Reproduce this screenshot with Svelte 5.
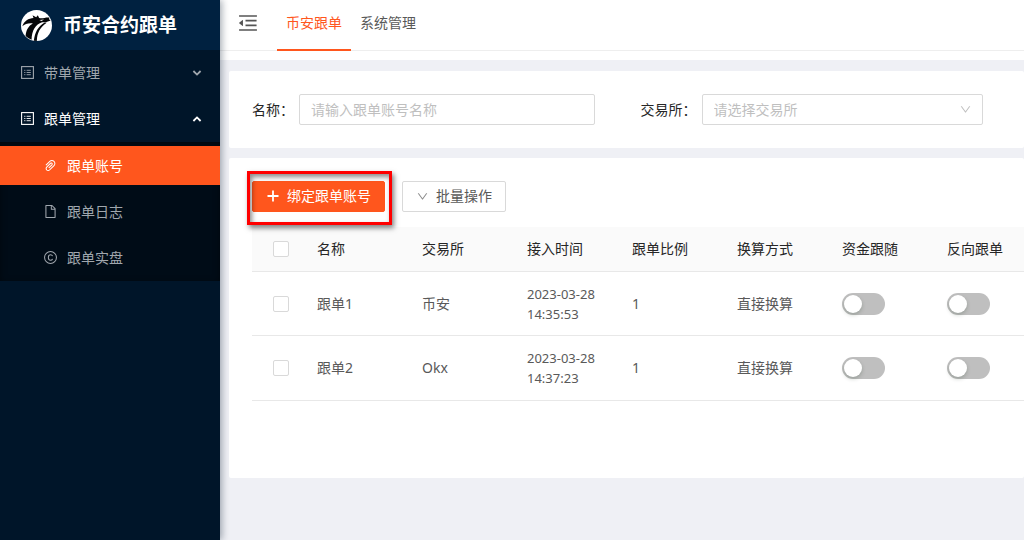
<script>
  const tabs = ['币安跟单', '系统管理'];
  let activeTab = $state('币安跟单');
  let copyOpen = $state(true);
  let leadOpen = $state(false);

  const subItems = [
    { label: '跟单账号', icon: 'clip' },
    { label: '跟单日志', icon: 'file' },
    { label: '跟单实盘', icon: 'copyright' }
  ];
  let activeItem = $state('跟单账号');

  const columns = ['名称', '交易所', '接入时间', '跟单比例', '换算方式', '资金跟随', '反向跟单'];
  let rows = $state([
    { name: '跟单1', exchange: '币安', date: '2023-03-28', time: '14:35:53', ratio: '1', mode: '直接换算', checked: false, follow: false, reverse: false },
    { name: '跟单2', exchange: 'Okx', date: '2023-03-28', time: '14:37:23', ratio: '1', mode: '直接换算', checked: false, follow: false, reverse: false }
  ]);
  let allChecked = $derived(rows.every((r) => r.checked));

  function toggleAll(event) {
    for (const row of rows) row.checked = event.currentTarget.checked;
  }
</script>

{#snippet profileIcon()}
  <svg class="icon" viewBox="0 0 13 13" aria-hidden="true">
    <rect x="0.6" y="0.6" width="11.8" height="11.8" fill="none" stroke="currentColor" stroke-width="1.1" />
    <path d="M3.2 4.3h1.2M3.2 6.5h1.2M3.2 8.7h1.2M5.6 4.3h4.2M5.6 6.5h4.2M5.6 8.7h4.2" fill="none" stroke="currentColor" stroke-width="0.9" />
  </svg>
{/snippet}

{#snippet downIcon()}
  <svg class="down" viewBox="64 64 896 896" fill="currentColor" aria-hidden="true">
    <path d="M884 256h-75c-5.1 0-9.9 2.5-12.9 6.6L512 654.2 227.9 262.6c-3-4.1-7.8-6.6-12.9-6.6h-75c-6.5 0-10.3 7.4-6.5 12.7l352.6 486.1c12.8 17.6 39 17.6 51.7 0l352.6-486.1c3.9-5.3.1-12.7-6.4-12.7z" />
  </svg>
{/snippet}

{#snippet caret(open)}
  <svg class="caret" class:open viewBox="0 0 10 8" aria-hidden="true">
    <path d="M1.4 2l3.6 3.6L8.6 2" fill="none" stroke="currentColor" stroke-width="1.8" />
  </svg>
{/snippet}

<div class="app">
  <aside>
    <div class="brand">
      <svg class="logo" viewBox="8 6 94 94" aria-hidden="true">
        <circle cx="55" cy="53" r="47" fill="#fff" />
        <path d="M12 55C17 39 31 31 46 30L43 22L54 28L59 22L63 30C73 33 84 27 94 29L93 34L98 38L83 43L72 43C52 50 41 66 40 96C34 94 28 90 22 85C23 67 31 54 44 47C31 45 20 49 12 55Z" fill="#050608" />
        <path d="M80 44C60 55 50 74 47 99L56 100C57 76 65 59 86 45Z" fill="#050608" />
        <path d="M64 36L78 35L70 39Z" fill="#fff" />
      </svg>
      <h1>币安合约跟单</h1>
    </div>
    <nav aria-label="主菜单">
      <button class="item" aria-expanded={leadOpen} onclick={() => (leadOpen = !leadOpen)}>
        {@render profileIcon()}<span>带单管理</span>{@render caret(leadOpen)}
      </button>
      <button class="item" class:expanded={copyOpen} aria-expanded={copyOpen} onclick={() => (copyOpen = !copyOpen)}>
        {@render profileIcon()}<span>跟单管理</span>{@render caret(copyOpen)}
      </button>
    </nav>
    {#if copyOpen}
      <ul class="submenu">
        {#each subItems as item}
          <li>
            <button class="item sub" class:active={activeItem === item.label} onclick={() => (activeItem = item.label)}>
              {#if item.icon === 'clip'}
                <svg class="icon" viewBox="64 64 896 896" fill="currentColor" aria-hidden="true">
                  <path d="M779.3 196.6c-94.2-94.2-247.6-94.2-341.7 0l-261 260.8c-1.7 1.7-2.6 4-2.6 6.4s.9 4.7 2.6 6.4l36.9 36.9a9 9 0 0 0 12.7 0l261-260.8c32.4-32.4 75.5-50.2 121.3-50.2s88.9 17.8 121.2 50.2c32.4 32.4 50.2 75.5 50.2 121.2 0 45.8-17.8 88.8-50.2 121.2l-266 265.9-43.1 43.1c-40.3 40.3-105.8 40.3-146.1 0-19.5-19.5-30.2-45.4-30.2-73s10.7-53.5 30.2-73l263.9-263.8c6.7-6.6 15.5-10.3 24.9-10.3h.1c9.4 0 18.1 3.7 24.7 10.3 6.7 6.7 10.3 15.5 10.3 24.9 0 9.3-3.7 18.1-10.3 24.7L372.4 653c-1.7 1.7-2.6 4-2.6 6.4s.9 4.7 2.6 6.4l36.9 36.9a9 9 0 0 0 12.7 0l215.6-215.6c19.9-19.9 30.8-46.3 30.8-74.4s-11-54.6-30.8-74.4c-41.1-41.1-107.9-41-149 0L463 364 224.8 602.1A172.22 172.22 0 0 0 174 724.8c0 46.3 18.1 89.8 50.8 122.5 33.9 33.8 78.3 50.7 122.7 50.7 44.4 0 88.8-16.9 122.6-50.7l309.2-309C824.8 492.7 850 432 850 367.5c.1-64.6-25.1-125.3-70.7-170.9z" />
                </svg>
              {:else if item.icon === 'file'}
                <svg class="icon" viewBox="64 64 896 896" fill="currentColor" aria-hidden="true">
                  <path d="M854.6 288.6L639.4 73.4c-6-6-14.1-9.4-22.6-9.4H192c-17.7 0-32 14.3-32 32v832c0 17.7 14.3 32 32 32h640c17.7 0 32-14.3 32-32V311.3c0-8.5-3.4-16.7-9.4-22.7zM790.2 326H602V137.8L790.2 326zm1.8 562H232V136h302v216a42 42 0 0 0 42 42h216v494z" />
                </svg>
              {:else}
                <svg class="icon" viewBox="0 0 14 14" fill="none" stroke="currentColor" aria-hidden="true">
                  <circle cx="7" cy="7" r="6.4" stroke-width="1.1" />
                  <path d="M9.2 5.6C8.9 4.5 8.1 4 7 4C5.5 4 4.7 5.1 4.7 7S5.5 10 7 10C8.1 10 8.9 9.5 9.2 8.4" stroke-width="1.1" />
                </svg>
              {/if}
              <span>{item.label}</span>
            </button>
          </li>
        {/each}
      </ul>
    {/if}
  </aside>

  <div class="page">
    <header>
      <div class="topbar">
        <button class="fold" aria-label="收起菜单">
          <svg viewBox="64 64 896 896" fill="currentColor" aria-hidden="true">
            <path d="M408 442h480c4.4 0 8-3.6 8-8v-56c0-4.4-3.6-8-8-8H408c-4.4 0-8 3.6-8 8v56c0 4.4 3.6 8 8 8zm-8 204c0 4.4 3.6 8 8 8h480c4.4 0 8-3.6 8-8v-56c0-4.4-3.6-8-8-8H408c-4.4 0-8 3.6-8 8v56zm504-486H120c-4.4 0-8 3.6-8 8v56c0 4.4 3.6 8 8 8h784c4.4 0 8-3.6 8-8v-56c0-4.4-3.6-8-8-8zm0 632H120c-4.4 0-8 3.6-8 8v56c0 4.4 3.6 8 8 8h784c4.4 0 8-3.6 8-8v-56c0-4.4-3.6-8-8-8zM115.4 518.9L271.7 642c5.8 4.6 14.4.5 14.4-6.9V388.9c0-7.4-8.5-11.5-14.4-6.9L115.4 505.1a8.74 8.74 0 0 0 0 13.8z" />
          </svg>
        </button>
        {#each tabs as tab}
          <button class="tab" class:current={activeTab === tab} onclick={() => (activeTab = tab)}>{tab}</button>
        {/each}
      </div>
    </header>

    <main>
      <form class="card filters">
        <div class="field">
          <label for="account-name">名称：</label>
          <input id="account-name" type="text" placeholder="请输入跟单账号名称" />
        </div>
        <div class="field">
          <label for="exchange">交易所：</label>
          <div class="select">
            <select id="exchange">
              <option value="">请选择交易所</option>
              <option>币安</option>
              <option>Okx</option>
            </select>
            {@render downIcon()}
          </div>
        </div>
      </form>

      <section class="card list">
        <div class="actions">
          <div class="marked">
            <button class="btn primary">
              <svg class="plus" viewBox="0 0 12 12" aria-hidden="true"><path d="M6 0.5v11M0.5 6h11" stroke="currentColor" stroke-width="1.8" /></svg>
              <span>绑定跟单账号</span>
            </button>
          </div>
          <button class="btn">{@render downIcon()}<span>批量操作</span></button>
        </div>

        <div class="scroller">
          <table>
            <thead>
              <tr>
                <th class="pick"><input type="checkbox" aria-label="全选" checked={allChecked} onchange={toggleAll} /></th>
                {#each columns as column}
                  <th scope="col">{column}</th>
                {/each}
              </tr>
            </thead>
            <tbody>
              {#each rows as row}
                <tr>
                  <td class="pick"><input type="checkbox" aria-label={row.name} bind:checked={row.checked} /></td>
                  <td>{row.name}</td>
                  <td>{row.exchange}</td>
                  <td class="stamp">{row.date} {row.time}</td>
                  <td>{row.ratio}</td>
                  <td>{row.mode}</td>
                  <td><input class="switch" type="checkbox" role="switch" aria-label="资金跟随" bind:checked={row.follow} /></td>
                  <td><input class="switch" type="checkbox" role="switch" aria-label="反向跟单" bind:checked={row.reverse} /></td>
                </tr>
              {/each}
            </tbody>
          </table>
        </div>
      </section>
    </main>
  </div>
</div>

<style>
  :global(body) {
    background: #eff0f5;
  }

  .app {
    display: flex;
    min-height: 100vh;
    font: 14px/20px 'Noto Sans', 'Noto Sans CJK SC', sans-serif;
    color: #595959;
  }

  button,
  input,
  select {
    box-sizing: border-box;
    margin: 0;
    font: inherit;
    color: inherit;
  }

  button {
    padding: 0;
    border: 0;
    background: none;
    cursor: pointer;
  }

  svg {
    display: block;
    flex: none;
  }

  aside {
    flex: 0 0 220px;
    position: relative;
    z-index: 1;
    background: #001529;
    box-shadow: 2px 0 7px rgba(0, 21, 41, 0.35);
  }

  .brand {
    display: flex;
    align-items: center;
    gap: 11px;
    height: 50px;
    padding-left: 21px;
    background: #002140;
  }

  .logo {
    width: 31px;
    height: 31px;
  }

  h1 {
    margin: 0;
    font-size: 19px;
    line-height: 28px;
    font-weight: 700;
    color: #fff;
  }

  nav {
    display: grid;
    gap: 7px;
    padding: 3px 0 4px;
  }

  .item {
    display: flex;
    align-items: center;
    gap: 10px;
    width: 100%;
    height: 39px;
    padding: 0 18px 0 21px;
    color: #a0a7ae;
    text-align: left;
  }

  .item.expanded {
    color: #fff;
  }

  .item.sub {
    padding-left: 44px;
  }

  .item.active {
    background: #ff561d;
    color: #fff;
  }

  .icon {
    width: 13px;
    height: 13px;
  }

  .caret {
    width: 10px;
    height: 8px;
    margin-left: auto;
  }

  .caret.open {
    transform: rotate(180deg);
  }

  .submenu {
    display: grid;
    gap: 7px;
    margin: 0;
    padding: 4px 0;
    list-style: none;
    background: #000c17;
    box-shadow: inset 0 2px 7px rgba(0, 0, 0, 0.45);
  }

  .page {
    flex: 1;
    min-width: 0;
  }

  header {
    padding-bottom: 9px;
    background: #fff;
  }

  .topbar {
    display: flex;
    height: 50px;
    padding-left: 18px;
    border-bottom: 1px solid #eeeeee;
  }

  .fold {
    align-self: center;
    margin: 0 19px 4px 0;
    color: #555;
  }

  .fold svg {
    width: 20px;
    height: 20px;
  }

  .tab {
    height: 51px;
    padding: 0 9px 4px;
    border-bottom: 2px solid transparent;
  }

  .tab.current {
    border-color: #ff561d;
    color: #ff561d;
  }

  main {
    display: grid;
    gap: 10px;
    padding: 11px 0 0 9px;
  }

  .card {
    min-width: 0;
    border-radius: 2px;
    background: #fff;
  }

  .filters {
    display: grid;
    grid-template-columns: 1fr 1fr;
    gap: 46px;
    padding: 23px 41px 23px 23px;
  }

  .field {
    display: flex;
    align-items: center;
    min-width: 0;
  }

  label {
    flex: none;
    color: #262626;
  }

  .field label {
    padding-right: 5px;
  }

  input[type='text'],
  select {
    flex: 1;
    width: 100%;
    min-width: 0;
    height: 31px;
    padding: 0 11px;
    border: 1px solid #d9d9d9;
    border-radius: 2px;
    background: #fff;
    outline: none;
  }

  input::placeholder {
    color: #bfbfbf;
    opacity: 1;
  }

  .select {
    position: relative;
    flex: 1;
    min-width: 0;
    color: #bfbfbf;
  }

  select {
    display: block;
    appearance: none;
  }

  .down {
    width: 11px;
    height: 11px;
    color: #8c8c8c;
  }

  .select .down {
    position: absolute;
    top: 10px;
    right: 12px;
    color: #bfbfbf;
    pointer-events: none;
  }

  .list {
    min-height: 320px;
    box-sizing: border-box;
    padding: 23px 0 23px 23px;
  }

  .actions {
    display: flex;
    gap: 17px;
    margin-bottom: 15px;
  }

  .marked {
    position: relative;
  }

  .marked::after {
    content: '';
    position: absolute;
    inset: -10px -7px -13px -5px;
    border: 3px solid #ff0000;
    box-shadow: 2px 3px 5px rgba(0, 0, 0, 0.5), inset 2px 3px 5px rgba(0, 0, 0, 0.45);
    pointer-events: none;
  }

  .btn {
    display: flex;
    align-items: center;
    gap: 8px;
    height: 31px;
    padding: 0 13px 1px 14px;
    border: 1px solid #d9d9d9;
    border-radius: 2px;
    background: #fff;
  }

  .btn.primary {
    border-color: #ff561d;
    background: #ff561d;
    color: #fff;
  }

  .plus {
    width: 12px;
    height: 12px;
  }

  .scroller {
    overflow: hidden;
  }

  table {
    width: 100%;
    min-width: 785px;
    table-layout: fixed;
    border-collapse: separate;
    border-spacing: 0;
  }

  th,
  td {
    box-sizing: border-box;
    padding: 0 15px;
    border-bottom: 1px solid #e8e8e8;
    text-align: left;
    font-weight: 400;
  }

  th {
    height: 45px;
    background: #fafafa;
    color: #262626;
  }

  td {
    height: 64px;
  }

  tr:last-child td {
    height: 65px;
  }

  .pick {
    width: 50px;
    padding: 0 0 0 21px;
  }

  .stamp {
    font-size: 13px;
  }

  .pick input,
  .switch {
    display: block;
    appearance: none;
    cursor: pointer;
  }

  .pick input {
    width: 16px;
    height: 16px;
    border: 1px solid #d9d9d9;
    border-radius: 2px;
    background: #fff;
  }

  .pick input:checked {
    border-color: #ff561d;
    background: #ff561d;
  }

  .switch {
    width: 43px;
    height: 22px;
    padding: 2px;
    border-radius: 11px;
    background: #bfbfbf;
  }

  .switch::before {
    content: '';
    display: block;
    width: 18px;
    height: 18px;
    border-radius: 50%;
    background: #fff;
    box-shadow: 0 2px 4px rgba(0, 35, 11, 0.2);
  }

  .switch:checked {
    background: #ff561d;
  }

  .switch:checked::before {
    margin-left: auto;
  }
</style>
